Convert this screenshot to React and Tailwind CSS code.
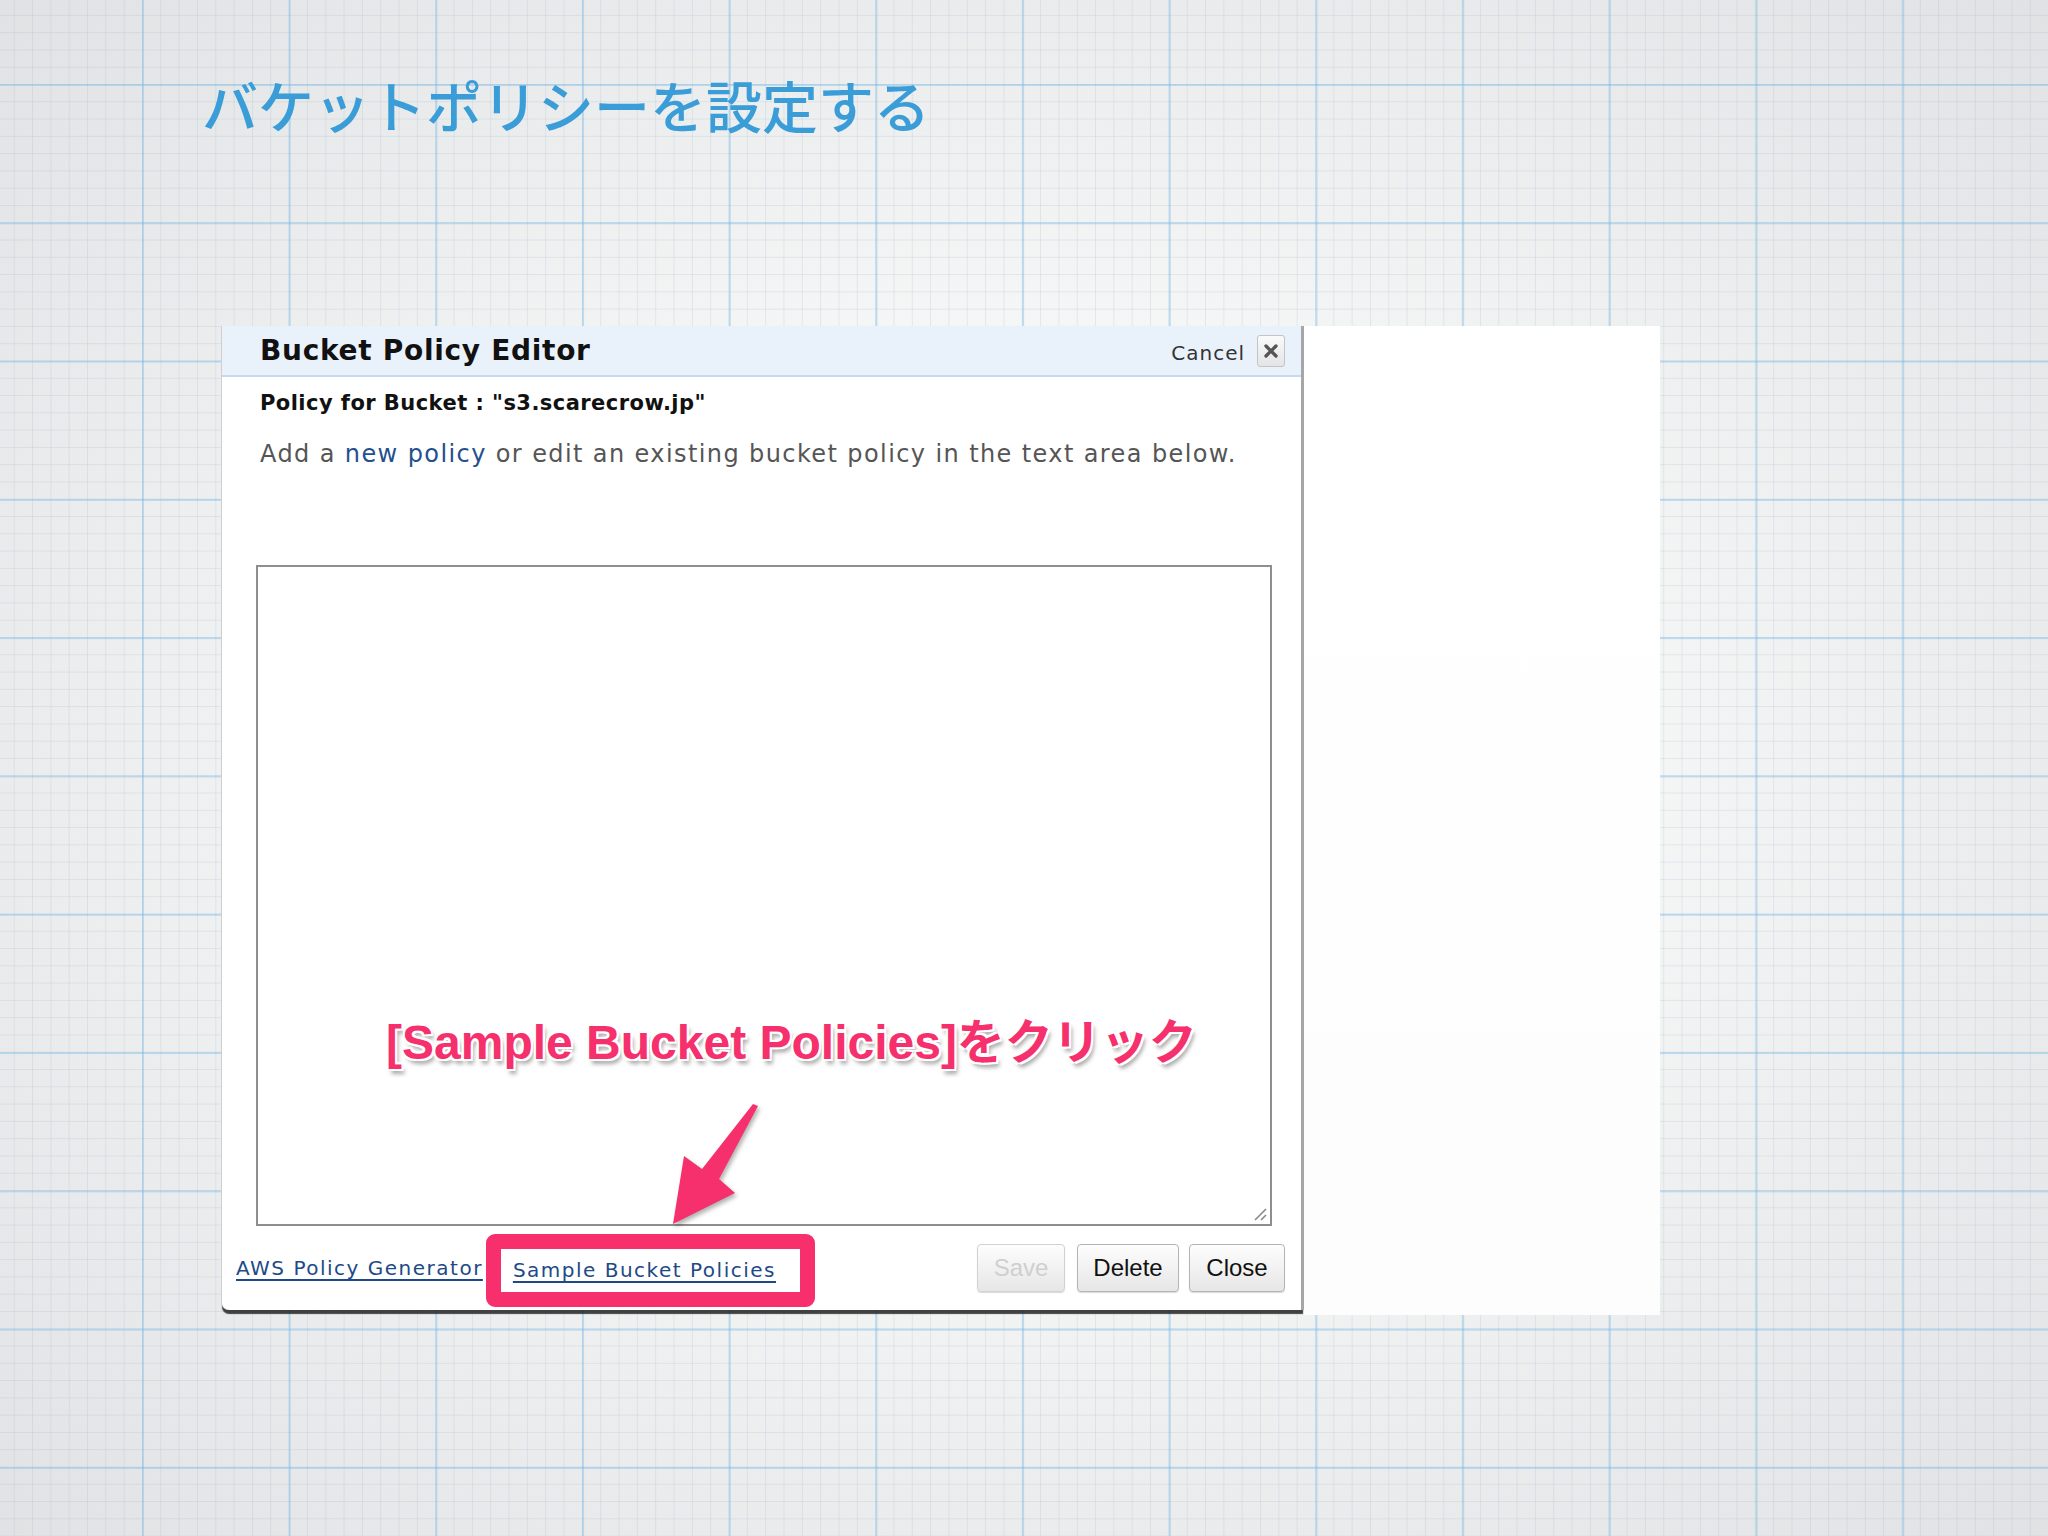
import React from "react";
import { X } from "lucide-react";

const ui = { fontFamily: '"DejaVu Sans", Verdana, sans-serif' };

const Btn = ({ children, disabled, w }) => (
  <div
    className={`${w} h-[48px] flex items-center justify-center rounded-[4px] border border-[#b4b4b4] bg-[linear-gradient(#fdfdfd,#e6e6e6)] shadow-[0_1px_1px_rgba(0,0,0,0.15)] text-[24px] ${
      disabled ? "text-[#cfcfcf] border-[#d2d2d2]" : "text-[#111]"
    }`}
    style={{ fontFamily: '"Liberation Sans", Arial, sans-serif' }}
  >
    {children}
  </div>
);

const App = () => {
  return (
    <div className="relative w-[2048px] h-[1536px] overflow-hidden bg-[#eef0f1] [background-image:linear-gradient(to_right,rgba(120,185,230,0.42)_2px,transparent_2px),linear-gradient(to_bottom,rgba(120,185,230,0.42)_2px,transparent_2px),linear-gradient(to_right,rgba(140,175,200,0.2)_1px,transparent_1px),linear-gradient(to_bottom,rgba(140,175,200,0.2)_1px,transparent_1px),radial-gradient(ellipse_at_center,#f7f8f8_35%,#e0e2e3_100%)] [background-size:146.7px_138.3px,146.7px_138.3px,18.34px_17.29px,18.34px_17.29px,100%_100%] [background-position:142px_84px,142px_84px,142px_84px,142px_84px,0_0]">
      {/* title */}
      <h1
        className="pt-[76px] pl-[202px] text-[56px] leading-none text-[#3a9dd8] font-medium"
        style={{ fontFamily: '"Noto Sans CJK JP", sans-serif' }}
      >
        バケットポリシーを設定する
      </h1>

      <div className="mt-[194px] ml-[221px] flex items-start">
        {/* dialog */}
        <div
          className="relative w-[1083px] h-[984px] flex flex-col bg-white border-l border-r-[3px] border-l-[#cfcfcf] border-r-[#a6a6a6] rounded-bl-[8px] shadow-[0_5px_1px_-1px_rgba(35,35,35,0.85)]"
          style={ui}
        >
          <div className="h-[51px] flex items-center justify-between pl-[38px] pr-[16px] bg-[#e9f1fb] border-b-2 border-[#c5d9ef]">
            <span className="text-[28px] font-bold tracking-[0.7px] text-[#111]">
              Bucket Policy Editor
            </span>
            <div className="flex items-center gap-[12px]">
              <span className="text-[20px] tracking-[1px] text-[#333] mt-[4px]">Cancel</span>
              <div className="w-[28px] h-[32px] flex items-center justify-center rounded-[3px] border border-[#c4c4c4] bg-[linear-gradient(#fafafa,#e4e4e4)]">
                <X size={20} strokeWidth={4} color="#555" />
              </div>
            </div>
          </div>

          <div className="mt-[14px] ml-[38px] text-[21px] leading-[25px] tracking-[0.45px] font-bold text-[#111]">
            Policy for Bucket : "s3.scarecrow.jp"
          </div>
          <div className="mt-[24px] ml-[38px] text-[24px] leading-[28px] tracking-[1.4px] text-[#555]">
            Add a <span className="text-[#244f8f]">new policy</span> or edit an existing bucket policy in the text area below.
          </div>

          <div className="relative mt-[97px] ml-[34px] w-[1016px] h-[661px] border-2 border-[#8e8e8e] bg-white">
            <svg className="absolute right-[3px] bottom-[3px]" width="16" height="16" viewBox="0 0 16 16">
              <path d="M15 4 L4 15 M15 10 L10 15" stroke="#8a8a8a" strokeWidth="1.6" />
            </svg>
          </div>

          <div className="flex-1 flex items-center pl-[14px] pr-[16px]">
            <span className="text-[20px] tracking-[1.5px] text-[#1d4a86] underline decoration-2 underline-offset-[4px]">
              AWS Policy Generator
            </span>
            <div className="ml-[3px] mt-[4px] w-[329px] h-[73px] flex items-center pl-[12px] border-[15px] border-[#f72f6c] rounded-[9px] bg-white">
              <span className="text-[20px] tracking-[1.5px] text-[#1d4a86] underline decoration-2 underline-offset-[4px]">
                Sample Bucket Policies
              </span>
            </div>
            <div className="ml-auto flex items-center">
              <Btn disabled w="w-[88px]">Save</Btn>
              <div className="ml-[12px]">
                <Btn w="w-[102px]">Delete</Btn>
              </div>
              <div className="ml-[10px]">
                <Btn w="w-[96px]">Close</Btn>
              </div>
            </div>
          </div>

          {/* annotation callout */}
          <div
            className="absolute left-[164px] top-[693px] text-[48px] leading-none font-bold text-[#f5306c] whitespace-nowrap [text-shadow:0_0_2px_#fff,2px_2px_0_#fff,-2px_-2px_0_#fff,2px_-2px_0_#fff,-2px_2px_0_#fff,3px_5px_4px_rgba(0,0,0,0.35)]"
            style={{ fontFamily: '"Liberation Sans", Arial, "Noto Sans CJK JP", sans-serif' }}
          >
            [Sample Bucket Policies]をクリック
          </div>
        </div>

        {/* blank white panel */}
        <div className="w-[356px] h-[989px] bg-[linear-gradient(to_bottom,#ffffff,#fdfdfd)]" />
      </div>

      {/* arrow */}
      <svg className="absolute left-0 top-0 pointer-events-none" width="2048" height="1536" viewBox="0 0 2048 1536">
        <polygon
          points="758,1106 719,1179 735,1193 673,1224 684,1156 702,1169 753,1104"
          fill="#f5306c"
          style={{ filter: "drop-shadow(2px 3px 2px rgba(0,0,0,0.3))" }}
        />
      </svg>
    </div>
  );
};

export default App;
